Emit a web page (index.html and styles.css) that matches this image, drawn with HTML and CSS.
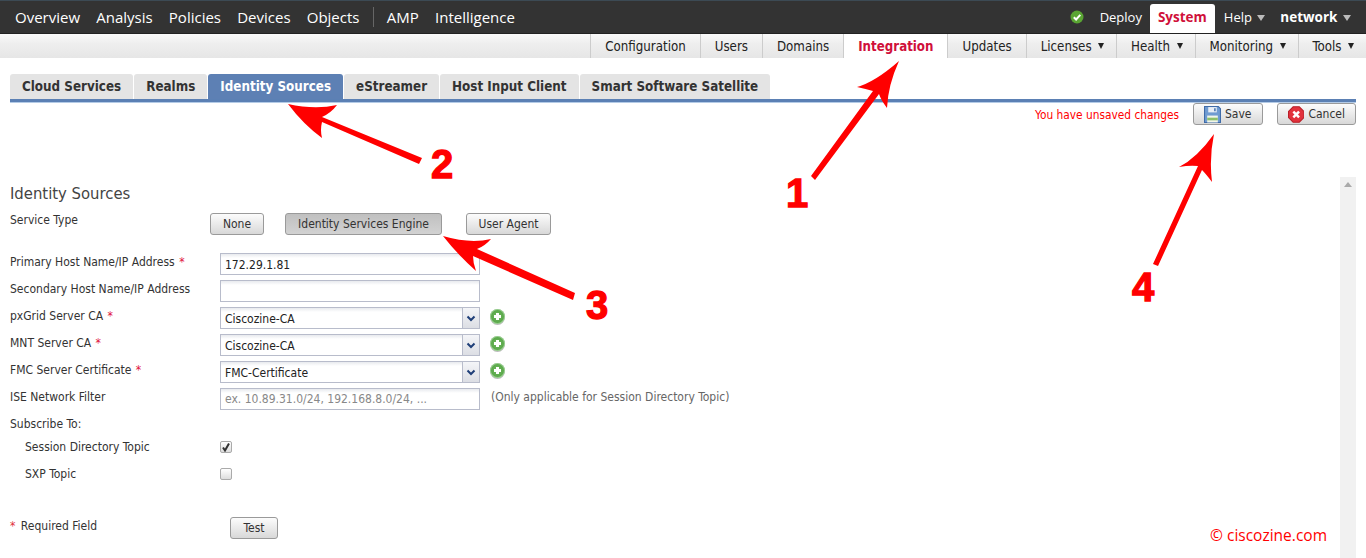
FILE: index.html
```html
<!DOCTYPE html>
<html lang="en">
<head>
<meta charset="utf-8">
<title>Identity Sources</title>
<link rel="stylesheet" href="styles.css">
</head>
<body>
<div class="page">
  <header class="topbar">
    <nav class="mainnav">
      <a>Overview</a><a>Analysis</a><a>Policies</a><a>Devices</a><a>Objects</a><span class="sep"></span><a>AMP</a><a>Intelligence</a>
    </nav>
    <nav class="usernav">
      <svg class="ok" viewBox="0 0 14 14" width="14" height="14"><circle cx="7" cy="7" r="6.5" fill="#5aa533"/><path d="M3.8 7.2l2.3 2.3 4.2-4.6" fill="none" stroke="#fff" stroke-width="2"/></svg>
      <a class="deploy">Deploy</a>
      <a class="system">System</a>
      <a class="help">Help <i class="caret grey"></i></a>
      <a class="network">network <i class="caret grey"></i></a>
    </nav>
  </header>
  <nav class="subbar">
    <a>Configuration</a><a>Users</a><a>Domains</a><a class="current">Integration</a><a>Updates</a><a class="menu">Licenses <i class="caret"></i></a><a class="menu">Health <i class="caret"></i></a><a class="menu">Monitoring <i class="caret"></i></a><a class="menu">Tools <i class="caret"></i></a>
  </nav>
  <div class="tabs">
    <a>Cloud Services</a><a>Realms</a><a class="active">Identity Sources</a><a>eStreamer</a><a>Host Input Client</a><a>Smart Software Satellite</a>
  </div>
  <div class="actions">
    <span class="unsaved">You have unsaved changes</span>
    <button class="btn action save">
      <svg viewBox="0 0 16 16" width="17" height="17"><path d="M.5.500h13l2 2v13H.5z" fill="#6f9bd1" stroke="#3f6ba8"/><path d="M4 1h8v5H4z" fill="#e8eef6"/><path d="M9.500 2H11v3H9.500z" fill="#4a76b0"/><path d="M3 9h10v6.500H3z" fill="#f2f5ea"/><path d="M3 11h10v2.500H3z" fill="#8cc06a"/></svg>
      Save
    </button>
    <button class="btn action cancel">
      <svg viewBox="0 0 16 16" width="17" height="17"><path d="M5 .5h6L15.500 5v6L11 15.500H5L.5 11V5z" fill="#e2323c" stroke="#b81f28"/><path d="M5.200 5.200l5.600 5.600M10.800 5.200l-5.600 5.600" stroke="#fff" stroke-width="2.400" fill="none"/></svg>
      Cancel
    </button>
  </div>
  <main class="content">
    <section class="form">
      <h2>Identity Sources</h2>
      <div class="svc">
        <span class="svc-label">Service Type</span>
        <div class="svc-btns">
          <button class="btn none">None</button>
          <button class="btn pressed">Identity Services Engine</button>
          <button class="btn agent">User Agent</button>
        </div>
      </div>
      <div class="row"><label>Primary Host Name/IP Address <b>*</b></label><input class="field" type="text" value="172.29.1.81"></div>
      <div class="row"><label>Secondary Host Name/IP Address</label><input class="field" type="text"></div>
      <div class="row"><label>pxGrid Server CA <b>*</b></label><div class="select"><span>Ciscozine-CA</span><i class="arrow"><svg viewBox="0 0 10 7" width="10" height="7"><path d="M1.500 1.500L5 5l3.500-3.500" fill="none" stroke="#1f3f78" stroke-width="2"/></svg></i></div><i class="plus"></i></div>
      <div class="row"><label>MNT Server CA <b>*</b></label><div class="select"><span>Ciscozine-CA</span><i class="arrow"><svg viewBox="0 0 10 7" width="10" height="7"><path d="M1.500 1.500L5 5l3.500-3.500" fill="none" stroke="#1f3f78" stroke-width="2"/></svg></i></div><i class="plus"></i></div>
      <div class="row"><label>FMC Server Certificate <b>*</b></label><div class="select"><span>FMC-Certificate</span><i class="arrow"><svg viewBox="0 0 10 7" width="10" height="7"><path d="M1.500 1.500L5 5l3.500-3.500" fill="none" stroke="#1f3f78" stroke-width="2"/></svg></i></div><i class="plus"></i></div>
      <div class="row"><label>ISE Network Filter</label><input class="field filter" type="text" placeholder="ex. 10.89.31.0/24, 192.168.8.0/24, ..."><span class="hint">(Only applicable for Session Directory Topic)</span></div>
      <div class="row sub"><label>Subscribe To:</label></div>
      <div class="row check"><label>Session Directory Topic</label><span class="box"><svg viewBox="0 0 10 10" width="10" height="10"><path d="M2 5.500l2 3 4-7" fill="none" stroke="#333" stroke-width="2"/></svg></span></div>
      <div class="row check"><label>SXP Topic</label><span class="box"></span></div>
      <div class="foot"><span class="req"><b>*</b> Required Field</span><button class="btn test">Test</button></div>
    </section>
    <aside class="scroll"><i></i></aside>
  </main>
  <p class="credit">© ciscozine.com</p>
  <svg class="notes" viewBox="0 0 1366 558" width="1366" height="558">
    <path d="M899 61Q875 82 857 87Q866 89 873 91L811 176L815 180L879 94Q881 100 887 108Q888 85 899 61z" fill="#f00"/>
    <path d="M288 104Q315 110 337 105Q331 113 322 117L422 158L419 164L322 122Q320 130 322 138Q303 124 288 104z" fill="#f00"/>
    <path d="M443 236Q470 244 491 239Q485 246 477 249L575 293L573 300L473 256Q473 263 476 271Q457 254 443 236z" fill="#f00"/>
    <path d="M1214 134Q1197 158 1179 167Q1190 165 1198 166L1153 264L1158 266L1202 170Q1206 174 1212 182Q1209 158 1214 134z" fill="#f00"/>
    <text class="num" x="786" y="207">1</text>
    <text class="num" x="431" y="178">2</text>
    <text class="num" x="586" y="319">3</text>
    <text class="num" x="1132" y="301">4</text>
  </svg>
</div>
</body>
</html>
```
FILE: styles.css
```css
* { box-sizing: border-box; }
html, body { margin: 0; padding: 0; height: 558px; overflow: hidden; background: #fff; }
body { font-family: "DejaVu Sans Condensed", "DejaVu Sans", sans-serif; font-size: 12px; color: #333; }
.page { position: relative; width: 1366px; height: 558px; overflow: hidden; display: flex; flex-direction: column; }
a { cursor: default; }

.topbar { height: 34px; flex: none; display: flex; justify-content: space-between; background: #333; border-top: 1px solid #3c4a54; border-bottom: 1px solid #222; color: #fff; font-family: "Open Sans", sans-serif; font-size: 15px; }
.mainnav { display: flex; align-items: center; padding-left: 15px; gap: 16.200px; height: 32px; }
.mainnav .sep { width: 1px; height: 20px; background: #666; margin: 0 -3px 0 -3px; }
.usernav { display: flex; align-items: center; height: 32px; font-size: 13px; }
.ok { margin-right: 16px; }
.deploy { margin-right: 8px; }
.system { background: #fff; color: #d0103a; font-weight: 700; font-size: 13.500px; height: 29px; padding: 4px 8px 0; border-radius: 3px 3px 0 0; margin-top: 3px; }
.help { margin: 0 15px 0 9px; }
.network { font-weight: 700; font-size: 13.500px; margin-right: 15px; }
.caret { display: inline-block; width: 0; height: 0; border: 3.500px solid transparent; border-top: 6px solid #222; border-bottom: 0; margin-left: 2px; vertical-align: 1px; }
.caret.grey { border-width: 6px 4px 0; border-top-color: #bbb; }

.subbar { height: 24px; flex: none; display: flex; justify-content: flex-end; background: linear-gradient(#fafafa, #eee 40%, #e6e6e6); font-size: 13.200px; color: #222; }
.subbar a { display: flex; align-items: center; gap: 4.500px; padding: 0 14px; border-left: 1px solid #ccc; white-space: nowrap; }
.subbar a.menu { padding-right: 12px; }
.subbar a.menu .caret { margin-left: 2px; }
.subbar a.current { background: #fff; color: #d0103a; font-weight: 700; }

.tabs { flex: none; display: flex; gap: 1px; margin: 15px 10px 0; height: 29px; align-items: flex-end; border-bottom: 3px solid #5b80b4; box-shadow: 0 1px 0 #b4cbe6; }
.tabs a { height: 25px; display: flex; align-items: center; padding: 0 12px; background: #e4e4e4; font-weight: 700; font-size: 13.300px; color: #333; border-radius: 3px 3px 0 0; white-space: nowrap; }
.tabs a.active { background: #5d80b4; color: #fff; }

.actions { flex: none; display: flex; align-items: center; justify-content: flex-end; height: 24px; padding-right: 10px; gap: 14px; }
.unsaved { color: #f00; font-size: 11.800px; margin-top: 2px; }
.btn { font: inherit; color: #333; border: 1px solid #9a9a9a; border-radius: 3px; background: linear-gradient(#fcfcfc, #d8d8d8); height: 22px; padding: 0 12px; }
.btn.action { display: flex; align-items: center; gap: 4px; padding: 0 10px; height: 22px; }
.btn.save { width: 70px; }
.btn.cancel { width: 79px; }
.btn.pressed { background: linear-gradient(#c0c0c0, #d2d2d2); }

.content { flex: 1; display: flex; justify-content: space-between; padding: 0 10px; min-height: 0; }
.form { flex: 1; padding-top: 58px; position: relative; }
h2 { margin: 0; font-weight: 400; font-size: 16.500px; line-height: 20px; color: #444; }
.svc { display: flex; height: 42px; margin-top: 7px; }
.svc-label { width: 200px; line-height: 18px; flex: none; }
.svc-btns { display: flex; margin-top: 2px; gap: 21px; align-items: flex-start; }
.svc-btns .none { width: 54px; padding: 0; }
.svc-btns .pressed { width: 157px; padding: 0; }
.svc-btns .agent { width: 85px; padding: 0; margin-left: 3px; }
.row { display: flex; height: 27px; align-items: flex-start; }
.row label { width: 210px; flex: none; line-height: 18px; }
.row label b, .req b { color: #e0103a; font-weight: 400; margin-left: 1px; }
.field, .select { width: 260px; height: 22px; border: 1px solid #b8bccb; background: linear-gradient(#e8eaee, #fff 4px); font: inherit; color: #222; padding: 2px 4px 0; margin: 0; }
.field.filter { padding-top: 0; }
.field::placeholder { color: #888; opacity: 1; }
.select { display: flex; align-items: center; justify-content: space-between; padding: 0 0 0 4px; }
.select span { margin-top: 2px; }
.arrow { width: 17px; height: 20px; display: flex; align-items: center; justify-content: center; border-left: 1px solid #b8bccb; background: linear-gradient(#f4f5f8, #dcdee4); }
.plus { width: 15px; height: 15px; border-radius: 50%; margin: 2px 0 0 10px; flex: none; background: radial-gradient(circle, #fff 0, #fff 0) center/7px 3px no-repeat, radial-gradient(circle, #fff 0, #fff 0) center/3px 7px no-repeat, radial-gradient(circle, #6db85c, #58a548 70%); box-shadow: inset 0 0 0 1px #94cc8b, 0 1px 0 #bbb; }
.hint { margin-left: 11px; color: #666; line-height: 18px; }
.sub { height: 23px; }
.check label { padding-left: 15px; }
.box { width: 12px; height: 12px; margin-top: 3px; border: 1px solid #aaa; border-radius: 2px; background: linear-gradient(#fff, #ddd); display: flex; align-items: center; justify-content: center; }
.foot { display: flex; align-items: flex-start; margin-top: 25px; }
.req { width: 220px; line-height: 18px; }
.req b { color: #e0303a; margin: 0 2px 0 0; }
.test { width: 48px; padding: 0; }

.scroll { width: 16px; margin-top: 51px; background: #f1f1f1; position: relative; }
.scroll i { position: absolute; left: 4px; top: 5px; border: 4px solid transparent; border-bottom: 5px solid #aaa; border-top: 0; }

.credit { position: absolute; right: 39px; top: 526px; margin: 0; color: #f00; font-family: "Open Sans", sans-serif; font-size: 15.500px; line-height: 18px; }
.notes { position: absolute; left: 0; top: 0; pointer-events: none; }
.num { font-family: "Liberation Sans", sans-serif; font-weight: 700; font-size: 40px; fill: #f00; stroke: #f00; stroke-width: 1.300px; }
```
